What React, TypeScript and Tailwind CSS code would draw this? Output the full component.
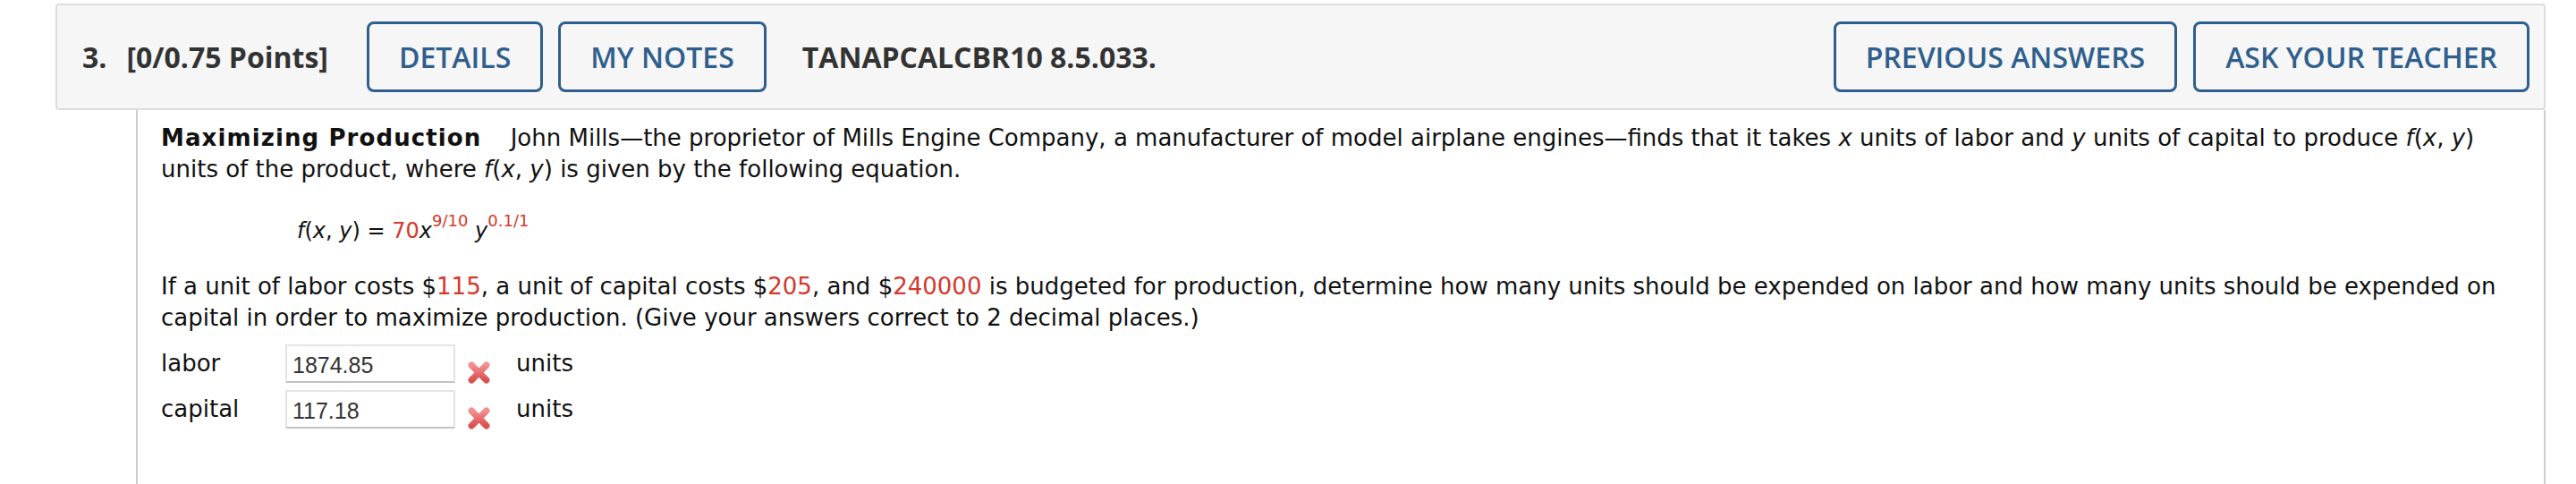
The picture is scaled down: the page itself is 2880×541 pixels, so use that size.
import React from "react";

const HeaderButton: React.FC<{ label: string }> = ({ label }) => (
  <button className="h-[79px] px-[33px] border-[3px] border-[#2f5f8e] rounded-[8px] text-[32px] font-semibold text-[#2f5f8e] leading-none">
    {label}
  </button>
);

const WrongMark: React.FC = () => (
  <svg width="27" height="27" viewBox="0 0 26 26" className="ml-[13px] mt-[20px] shrink-0">
    <defs>
      <linearGradient id="xg" x1="0" y1="0" x2="0" y2="1">
        <stop offset="0" stopColor="#f29090" />
        <stop offset="1" stopColor="#dc4f4f" />
      </linearGradient>
    </defs>
    <path d="M5 5 L21 21 M21 5 L5 21" stroke="url(#xg)" strokeWidth="7" strokeLinecap="round" />
  </svg>
);

const AnswerRow: React.FC<{ label: string; value: string }> = ({ label, value }) => (
  <div className="flex items-center h-[43px]">
    <div className="w-[139px]">{label}</div>
    <input
      readOnly
      value={value}
      className="w-[190px] h-[43px] border-2 border-[#e4e4e4] border-b-[#c2c2c2] px-[6px] pt-[3px] text-[25px] text-[#333] font-['Liberation_Sans',Arial,sans-serif] outline-none"
    />
    <WrongMark />
    <div className="ml-[28px]">units</div>
  </div>
);

const Red: React.FC<{ children: React.ReactNode }> = ({ children }) => (
  <span className="text-[#d4382c]">{children}</span>
);

export default function App() {
  return (
    <div className="min-h-screen bg-white pt-[4px] pl-[62px] pr-[34px]">
      {/* header */}
      <div className="h-[119px] flex items-center bg-[#f6f6f6] border-2 border-[#dcdcdc] rounded-[4px] pl-[28px] pr-[16px] font-['Open_Sans',sans-serif]">
        <span className="text-[32px] font-bold text-[#333]">3.</span>
        <span className="ml-[22px] text-[32px] font-bold text-[#333]">[0/0.75 Points]</span>
        <div className="ml-[43px] flex gap-[17px]">
          <HeaderButton label="DETAILS" />
          <HeaderButton label="MY NOTES" />
        </div>
        <span className="ml-[40px] text-[32px] font-bold text-[#333]">TANAPCALCBR10 8.5.033.</span>
        <div className="ml-auto flex gap-[18px]">
          <HeaderButton label="PREVIOUS ANSWERS" />
          <HeaderButton label="ASK YOUR TEACHER" />
        </div>
      </div>

      {/* question body */}
      <div className="ml-[90px] min-h-[418px] border-l-2 border-r-2 border-[#cfcfcf] pl-[26px] pr-[10px] pt-[14px] font-['DejaVu_Sans',Verdana,sans-serif] text-[26px] leading-[35px] text-[#111]">
        <p>
          <span className="font-bold tracking-[1.1px] mr-[24px]">Maximizing Production</span> John Mills—the
          proprietor of Mills Engine Company, a manufacturer of model airplane engines—finds that it takes{" "}
          <i>x</i> units of labor and <i>y</i> units of capital to produce <i>f</i>(<i>x</i>, <i>y</i>)
          <br />
          units of the product, where <i>f</i>(<i>x</i>, <i>y</i>) is given by the following equation.
        </p>

        <p className="mt-[34px] pl-[152px] text-[24px]">
          <i>f</i>(<i>x</i>, <i>y</i>) = <Red>70</Red>
          <i>x</i>
          <sup className="text-[18px] top-[-13px] text-[#d4382c]">9/10</sup> <i>y</i>
          <sup className="text-[18px] top-[-13px] text-[#d4382c]">0.1/1</sup>
        </p>

        <p className="mt-[27px]">
          If a unit of labor costs $<Red>115</Red>, a unit of capital costs $<Red>205</Red>, and $
          <Red>240000</Red> is budgeted for production, determine how many units should be expended on labor and
          how many units should be expended on
          <br />
          capital in order to maximize production. (Give your answers correct to 2 decimal places.)
        </p>

        <div className="mt-[12px] flex flex-col gap-[8px]">
          <AnswerRow label="labor" value="1874.85" />
          <AnswerRow label="capital" value="117.18" />
        </div>
      </div>
    </div>
  );
}
